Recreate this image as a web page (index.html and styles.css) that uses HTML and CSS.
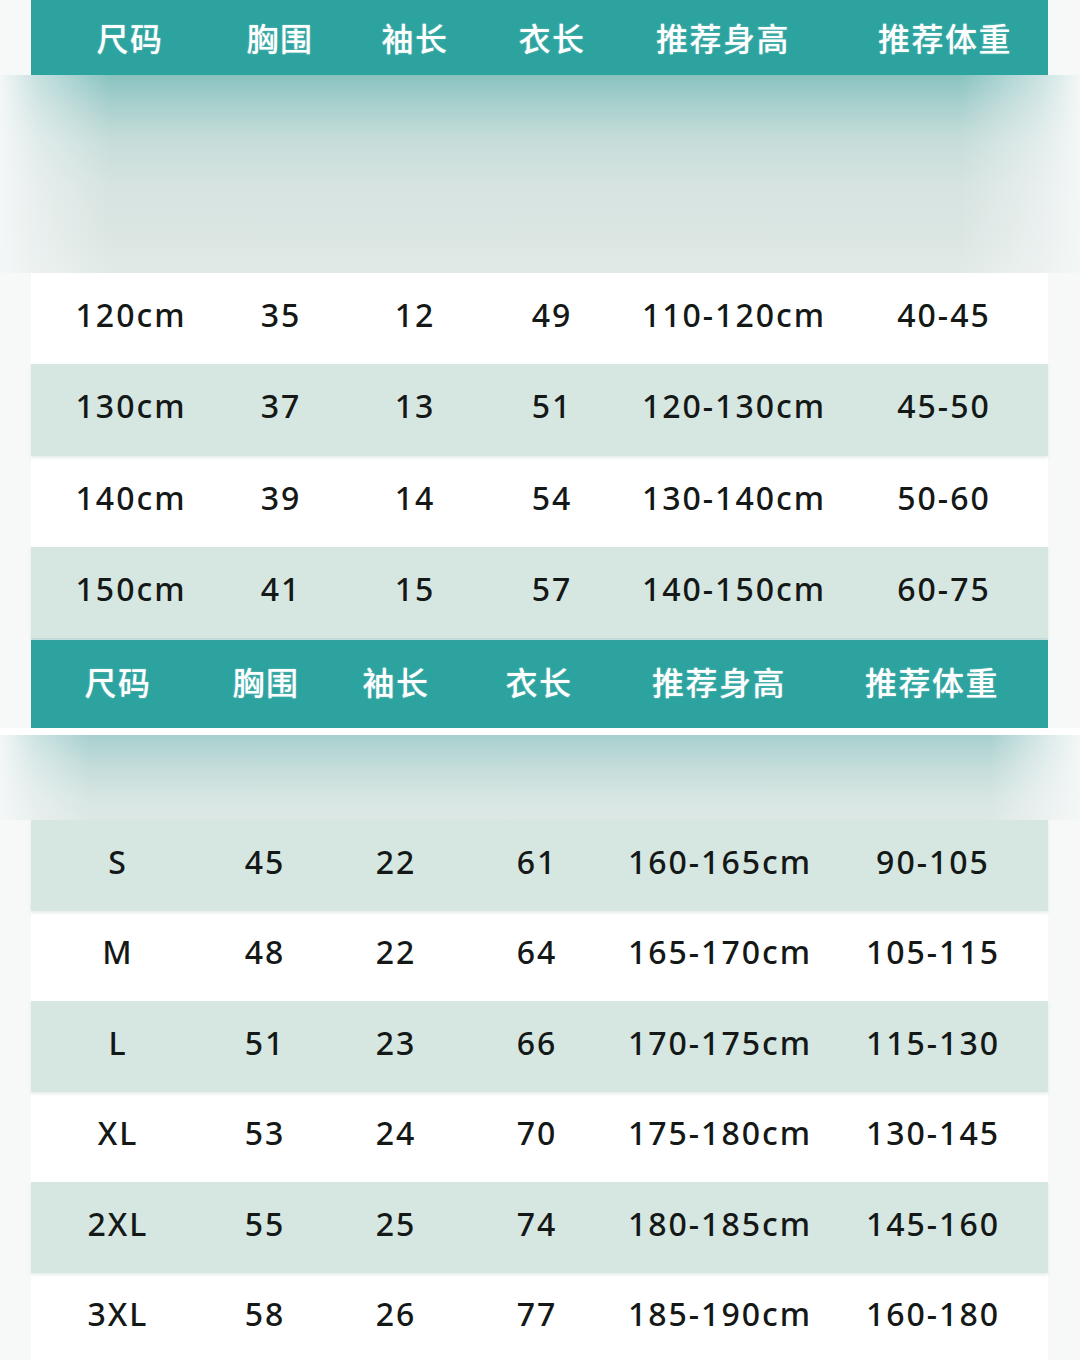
FILE: index.html
```html
<!DOCTYPE html>
<html lang="zh-CN">
<head>
<meta charset="utf-8">
<title>尺码表</title>
<link rel="stylesheet" href="styles.css">
</head>
<body>
<main class="sheet">
  <section class="chart chart-kids">
    <div class="row head">
      <span>尺码</span><span>胸围</span><span>袖长</span><span>衣长</span><span>推荐身高</span><span>推荐体重</span>
    </div>
    <div class="band band-tall"></div>
    <div class="row">
      <span>120cm</span><span>35</span><span>12</span><span>49</span><span class="h">110-120cm</span><span>40-45</span>
    </div>
    <div class="row tint">
      <span>130cm</span><span>37</span><span>13</span><span>51</span><span class="h">120-130cm</span><span>45-50</span>
    </div>
    <div class="row">
      <span>140cm</span><span>39</span><span>14</span><span>54</span><span class="h">130-140cm</span><span>50-60</span>
    </div>
    <div class="row tint">
      <span>150cm</span><span>41</span><span>15</span><span>57</span><span class="h">140-150cm</span><span>60-75</span>
    </div>
  </section>

  <section class="chart chart-adult">
    <div class="row head">
      <span>尺码</span><span>胸围</span><span>袖长</span><span>衣长</span><span>推荐身高</span><span>推荐体重</span>
    </div>
    <div class="gap"></div>
    <div class="band band-short"></div>
    <div class="row tint">
      <span>S</span><span>45</span><span>22</span><span>61</span><span>160-165cm</span><span>90-105</span>
    </div>
    <div class="row">
      <span>M</span><span>48</span><span>22</span><span>64</span><span>165-170cm</span><span>105-115</span>
    </div>
    <div class="row tint">
      <span>L</span><span>51</span><span>23</span><span>66</span><span>170-175cm</span><span>115-130</span>
    </div>
    <div class="row">
      <span>XL</span><span>53</span><span>24</span><span>70</span><span>175-180cm</span><span>130-145</span>
    </div>
    <div class="row tint">
      <span>2XL</span><span>55</span><span>25</span><span>74</span><span>180-185cm</span><span>145-160</span>
    </div>
    <div class="row">
      <span>3XL</span><span>58</span><span>26</span><span>77</span><span>185-190cm</span><span>160-180</span>
    </div>
  </section>
</main>
</body>
</html>
```

FILE: styles.css
```css
* { box-sizing: border-box; }

html, body {
  margin: 0;
  padding: 0;
}

body {
  background: #f7f9f9;
  font-family: "Noto Sans", "Noto Sans CJK SC", sans-serif;
  color: #141817;
  width: 1080px;
  height: 1360px;
  overflow: hidden;
}

.sheet {
  display: flex;
  flex-direction: column;
}

.chart {
  display: flex;
  flex-direction: column;
}

.row {
  display: grid;
  align-items: center;
  margin: 0 32px 0 31px;
  padding-bottom: 8px;
  background: #ffffff;
  font-size: 32px;
  font-weight: 500;
  letter-spacing: 2px;
  white-space: nowrap;
}

.row span {
  text-align: center;
}

.row.tint {
  background: #d6e6e1;
  box-shadow: 0 2px 3px rgba(120, 150, 145, 0.18);
  position: relative;
  z-index: 1;
}

.row.head {
  background: #2ca39f;
  color: #ffffff;
  font-family: "Noto Sans CJK SC", sans-serif;
  font-weight: 500;
  letter-spacing: 1.5px;
  text-shadow: 0 0 2px rgba(255, 255, 255, 0.35);
}

/* Kids table */
.chart-kids .row {
  grid-template-columns: 200px 100px 168px 106px 246px 186px 1fr;
  height: 91.25px;
}

.chart-kids .row.head {
  height: 75px;
  padding-top: 0;
  padding-bottom: 1px;
  grid-template-columns: 198px 102px 168px 106px 236px 208px 1fr;
}

.chart-kids .row .h {
  padding-left: 12px;
}

/* Adult table */
.chart-adult .row {
  grid-template-columns: 174px 120px 142px 140px 226px 200px 1fr;
  height: 90.5px;
}

.chart-adult .row.head {
  height: 90px;
  padding-bottom: 6px;
  grid-template-columns: 174px 122px 138px 148px 212px 214px 1fr;
  border-top: 2px solid #cfe6e6;
}

.gap {
  height: 7px;
  background: #ffffff;
}

.band {
  width: 100%;
}

.band-tall {
  height: 198px;
  background:
    linear-gradient(to right,
      rgba(244, 247, 247, 1) 0px,
      rgba(244, 247, 247, 0.55) 40px,
      rgba(244, 247, 247, 0) 110px,
      rgba(244, 247, 247, 0) 960px,
      rgba(244, 247, 247, 0.6) 1040px,
      rgba(244, 247, 247, 1) 1080px),
    linear-gradient(to bottom,
      #88c3c0 0px,
      #a9d0cd 30px,
      #c6ddda 65px,
      #d6e3e0 110px,
      #dbe6e3 160px,
      #e1eae7 198px);
}

.band-short {
  height: 85px;
  background:
    linear-gradient(to right,
      rgba(244, 247, 247, 1) 0px,
      rgba(244, 247, 247, 0.5) 35px,
      rgba(244, 247, 247, 0) 90px,
      rgba(244, 247, 247, 0) 990px,
      rgba(244, 247, 247, 0.7) 1050px,
      rgba(244, 247, 247, 1) 1080px),
    linear-gradient(to bottom,
      #a7d0ce 0px,
      #c2dcda 30px,
      #d6e5e2 60px,
      #dde8e5 85px);
}
```
